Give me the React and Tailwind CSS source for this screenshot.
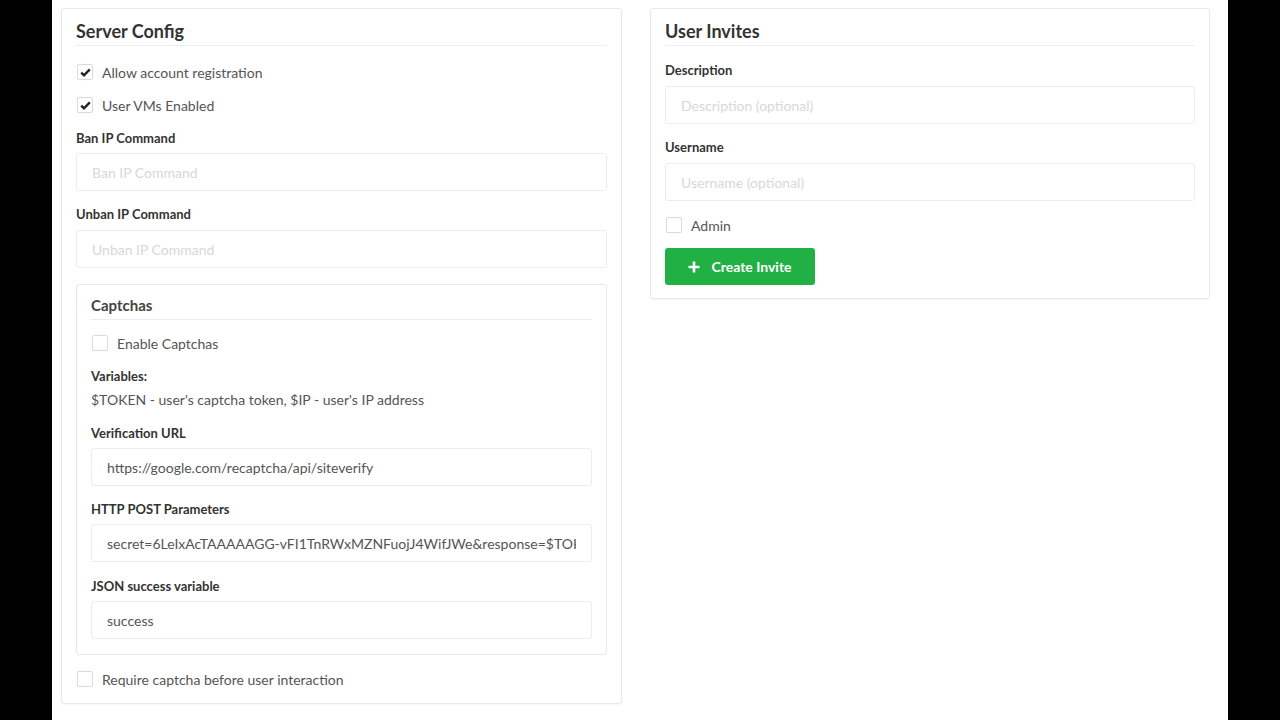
import React from 'react';

const font = { fontFamily: 'Lato, "Noto Sans", sans-serif' };

const CheckBox = ({ checked, label, className = '' }) => (
  <label className={`flex items-center h-5 ${className}`}>
    <span className="ml-[1px] w-4 h-4 rounded-[2px] border border-[#dcdcdc] bg-white flex items-center justify-center shadow-[0_0_1px_rgba(0,0,0,0.08)]">
      {checked && (
        <svg width="11" height="9" viewBox="0 0 11 9">
          <path d="M1.2 4.6 L4 7.3 L9.8 1.4" fill="none" stroke="#222" strokeWidth="2.4" />
        </svg>
      )}
    </span>
    <span className="ml-[9px] text-[14px] text-[#555]">{label}</span>
  </label>
);

const Label = ({ children, className = '' }) => (
  <div className={`text-[13px] leading-[18px] font-bold text-[#333] ${className}`}>{children}</div>
);

const Field = ({ placeholder, value, className = '' }) => (
  <input
    readOnly
    placeholder={placeholder}
    value={value || ''}
    className={`block w-full h-[38px] px-[15px] text-[14px] text-[#555] placeholder:text-[#d8d8d8] border border-[#ececec] rounded-[3px] bg-white outline-none ${className}`}
    style={font}
  />
);

const PanelTitle = ({ children }) => (
  <div className="pt-[11px] pb-[3px] border-b border-[#ededed]">
    <h2 className="text-[18px] leading-[22px] font-bold text-[#333]">{children}</h2>
  </div>
);

export default function App() {
  return (
    <div className="min-h-screen bg-black flex justify-center" style={font}>
      <div className="w-[1176px] h-[720px] bg-white flex items-start pl-[9px] pt-[8px] gap-[28px]">
        {/* server config */}
        <div className="w-[561px] border border-[#e8e8e8] rounded-[3px] px-[14px] pb-[14px] shadow-[0_1px_2px_rgba(0,0,0,0.04)]">
          <PanelTitle>Server Config</PanelTitle>
          <CheckBox checked label="Allow account registration" className="mt-[16px]" />
          <CheckBox checked label="User VMs Enabled" className="mt-[13px]" />
          <Label className="mt-[14px]">Ban IP Command</Label>
          <Field placeholder="Ban IP Command" className="mt-[6px]" />
          <Label className="mt-[14px]">Unban IP Command</Label>
          <Field placeholder="Unban IP Command" className="mt-[7px]" />

          <div className="mt-[16px] border border-[#e8e8e8] rounded-[3px] px-[14px] pb-[15px]">
            <div className="pt-[10px] pb-[4px] border-b border-[#ededed]">
              <h3 className="text-[15px] leading-[20px] font-bold text-[#444]">Captchas</h3>
            </div>
            <CheckBox label="Enable Captchas" className="mt-[13px]" />
            <Label className="mt-[14px]">Variables:</Label>
            <div className="mt-[6px] text-[14px] leading-[18px] text-[#555]">
              $TOKEN - user's captcha token, $IP - user's IP address
            </div>
            <Label className="mt-[15px]">Verification URL</Label>
            <Field value="https://google.com/recaptcha/api/siteverify" className="mt-[6px]" />
            <Label className="mt-[14px]">HTTP POST Parameters</Label>
            <Field value="secret=6LeIxAcTAAAAAGG-vFI1TnRWxMZNFuojJ4WifJWe&response=$TOKEN&remoteip=$IP" className="mt-[6px]" />
            <Label className="mt-[15px]">JSON success variable</Label>
            <Field value="success" className="mt-[6px]" />
          </div>

          <CheckBox label="Require captcha before user interaction" className="mt-[14px]" />
        </div>

        {/* user invites */}
        <div className="w-[560px] border border-[#e8e8e8] rounded-[3px] px-[14px] pb-[13px] shadow-[0_1px_2px_rgba(0,0,0,0.04)]">
          <PanelTitle>User Invites</PanelTitle>
          <Label className="mt-[15px]">Description</Label>
          <Field placeholder="Description (optional)" className="mt-[7px]" />
          <Label className="mt-[14px]">Username</Label>
          <Field placeholder="Username (optional)" className="mt-[7px]" />
          <CheckBox label="Admin" className="mt-[14px]" />
          <button className="mt-[13px] w-[150px] h-[37px] rounded-[3px] bg-[#21b043] text-white text-[14px] font-bold flex items-center justify-center gap-[11px]">
            <svg width="12" height="12" viewBox="0 0 12 12">
              <path d="M6 0.5 V11.5 M0.5 6 H11.5" stroke="#fff" strokeWidth="2.6" />
            </svg>
            Create Invite
          </button>
        </div>
      </div>
    </div>
  );
}
